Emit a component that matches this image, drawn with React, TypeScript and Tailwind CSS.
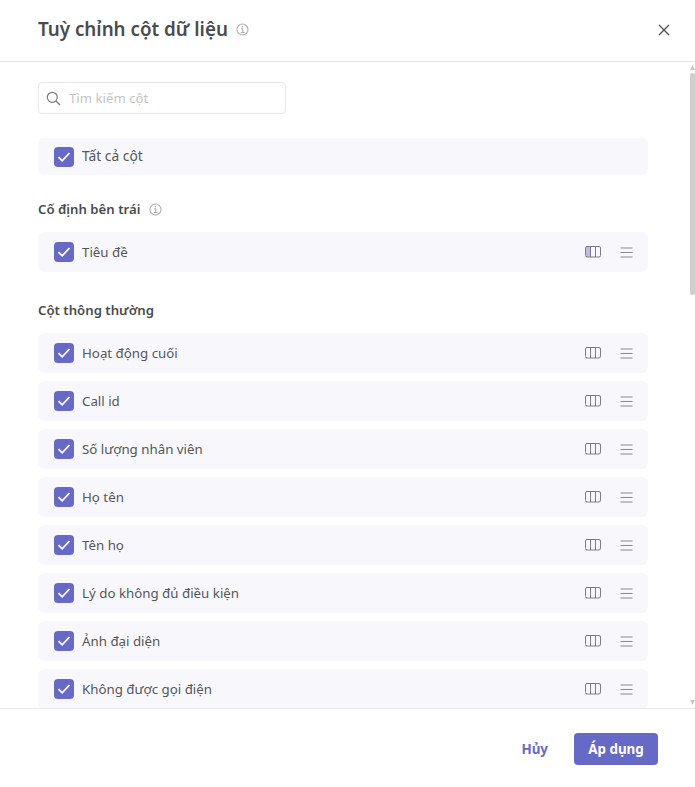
import React from "react";

const Info = ({ size = 14 }: { size?: number }) => (
  <svg width={size} height={size} viewBox="0 0 14 14" fill="none" stroke="#aaaaaa" strokeWidth="1.1">
    <circle cx="7" cy="7" r="6" />
    <path d="M5.6 6.3H7.3V10M5.2 10.2H9" />
    <path d="M6.2 4H7.6" strokeWidth="1.4" />
  </svg>
);

const Check = () => (
  <span className="flex h-5 w-5 shrink-0 items-center justify-center rounded-[4px] bg-[#6769c6]">
    <svg width="14" height="12" viewBox="0 0 14 12" fill="none" stroke="#ffffff" strokeWidth="1.8">
      <path d="M1.5 6.2L5.2 9.8L12.5 2" />
    </svg>
  </span>
);

const Columns = ({ pinned }: { pinned?: boolean }) => (
  <svg width="16" height="12" viewBox="0 0 16 12" fill="none">
    {pinned && <rect x="1" y="1" width="4.5" height="10" fill="#b9bbe8" />}
    <rect x="0.5" y="0.5" width="15" height="10.5" rx="1.5" stroke="#7d7d7d" />
    <path d="M5.5 1V11M10.5 1V11" stroke="#7d7d7d" />
  </svg>
);

const Menu = () => (
  <svg width="13" height="11" viewBox="0 0 13 11" fill="none" stroke="#8a8a8a">
    <path d="M0.5 1H12.5M0.5 5.5H12.5M0.5 10H12.5" />
  </svg>
);

const Row = ({ label, pinned }: { label: string; pinned?: boolean }) => (
  <div className="flex h-10 shrink-0 items-center rounded-md bg-[#f8f8fc] pl-4 pr-[15px]">
    <Check />
    <span className="ml-2 flex-1 translate-y-px text-[13.3px] text-[#55565a]">{label}</span>
    <Columns pinned={pinned} />
    <span className="ml-[19px] flex"><Menu /></span>
  </div>
);

const items = [
  "Hoạt động cuối",
  "Call id",
  "Số lượng nhân viên",
  "Họ tên",
  "Tên họ",
  "Lý do không đủ điều kiện",
  "Ảnh đại diện",
  "Không được gọi điện",
];

export default function App() {
  return (
    <div className="flex h-[787px] w-[695px] flex-col overflow-hidden bg-white font-['Noto_Sans',sans-serif]">
      <header className="flex h-[62px] shrink-0 items-center border-b border-[#e8e8ea] pb-[2px] pl-[38px] pr-[25px]">
        <h1 className="text-[18.8px] font-semibold text-[#4a4b4e]">Tuỳ chỉnh cột dữ liệu</h1>
        <span className="ml-2 flex"><Info size={13} /></span>
        <svg className="ml-auto" width="12" height="12" viewBox="0 0 12 12" stroke="#4f4f4f" strokeWidth="1.3">
          <path d="M1 1L11 11M11 1L1 11" />
        </svg>
      </header>

      <div className="relative min-h-0 flex-1">
        <main className="flex h-full flex-col overflow-hidden pl-[38px] pr-[47px] pt-5">
          <div className="flex h-8 w-[248px] shrink-0 items-center rounded-[4px] border border-[#e9e9eb] pl-[7px]">
            <svg width="15" height="15" viewBox="0 0 15 15" fill="none" stroke="#7b7b7b" strokeWidth="1.2">
              <circle cx="6.3" cy="6.3" r="5" />
              <path d="M10 10L14 14" />
            </svg>
            <span className="ml-2 translate-y-px text-[13.2px] text-[#c4c4c6]">Tìm kiếm cột</span>
          </div>

          <div className="mt-6 flex h-[37px] shrink-0 items-center rounded-md bg-[#f8f8fc] pl-4">
            <Check />
            <span className="ml-2 text-[13.8px] text-[#55565a]">Tất cả cột</span>
          </div>

          <div className="mt-6 flex h-[21px] shrink-0 items-center">
            <span className="text-[13.2px] font-semibold text-[#4a4b4e]">Cố định bên trái</span>
            <span className="ml-[9px] flex"><Info size={13} /></span>
          </div>
          <div className="mt-[12px] flex flex-col">
            <Row label="Tiêu đề" pinned />
          </div>

          <div className="mt-[28px] flex h-[21px] shrink-0 items-center">
            <span className="text-[13.2px] font-semibold text-[#4a4b4e]">Cột thông thường</span>
          </div>
          <div className="mt-[12px] flex flex-col gap-2">
            {items.map((t) => (
              <Row key={t} label={t} />
            ))}
          </div>
        </main>

        <div className="absolute inset-y-0 right-0 w-[5px]">
          <svg className="absolute left-0 top-[3px]" width="5" height="5" viewBox="0 0 5 5" fill="#c8c8c8"><path d="M2.5 0L5 5H0Z" /></svg>
          <div className="absolute left-0 top-[11px] h-[222px] w-[5px] rounded-[2px] bg-[#cfcfcf]" />
          <svg className="absolute bottom-[3px] left-0" width="5" height="5" viewBox="0 0 5 5" fill="#c8c8c8"><path d="M2.5 5L5 0H0Z" /></svg>
        </div>
      </div>

      <footer className="flex h-[79px] shrink-0 items-center justify-end border-t border-[#e8e8ea] pt-[2px] pr-[37px]">
        <button className="text-[13.4px] font-bold text-[#6769c6]">Hủy</button>
        <button className="ml-[26px] h-8 w-[84px] rounded-[4px] bg-[#6769c6] text-[13.4px] font-bold text-white">Áp dụng</button>
      </footer>
    </div>
  );
}
